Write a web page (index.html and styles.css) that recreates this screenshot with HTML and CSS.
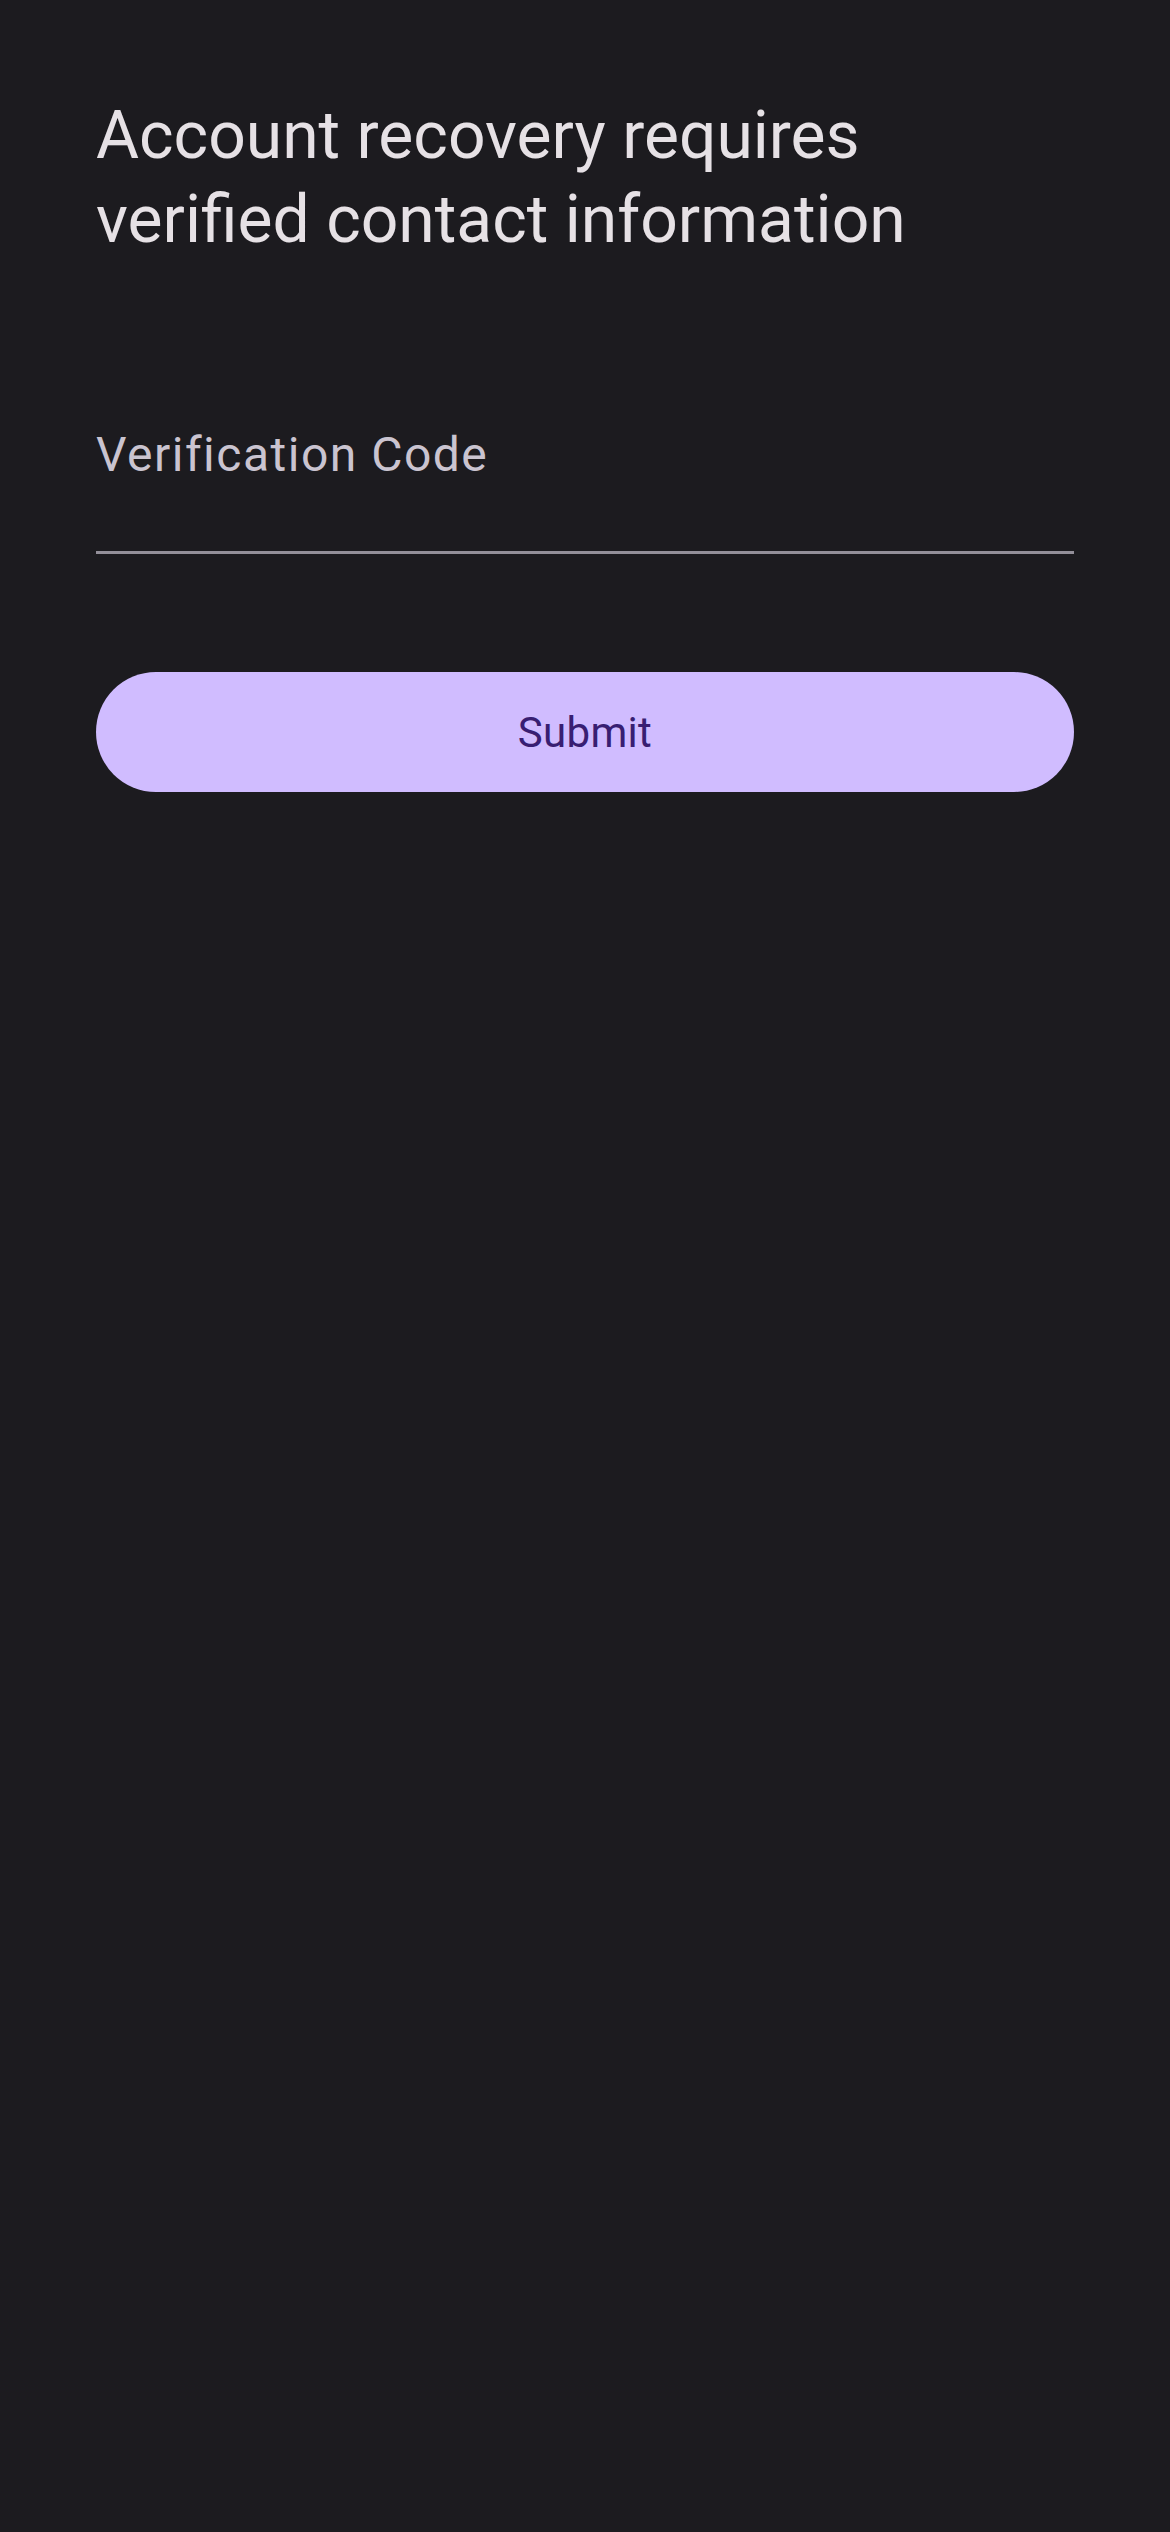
FILE: index.html
```html
<!DOCTYPE html>
<html lang="en">
<head>
<meta charset="utf-8">
<title>Account recovery</title>
<link rel="stylesheet" href="styles.css">
</head>
<body>
<main class="screen">
  <h1 class="title">Account recovery requires verified contact information</h1>
  <label class="field">
    <span class="field-label">Verification Code</span>
  </label>
  <button class="submit" type="button">Submit</button>
</main>
</body>
</html>
```

FILE: styles.css
```css
html, body {
  margin: 0;
  padding: 0;
  background: #1c1b1f;
}
body {
  width: 1170px;
  min-height: 2532px;
  font-family: Roboto, "Noto Sans", "Liberation Sans", sans-serif;
}
.screen {
  display: flex;
  flex-direction: column;
  padding: 94px 96px 0 96px;
}
.title {
  margin: 0;
  font-size: 66px;
  line-height: 84px;
  font-weight: 400;
  color: #e6e1e5;
  max-width: 930px;
}
.field {
  display: block;
  margin-top: 165px;
  border-bottom: 3px solid #938f99;
  height: 124px;
}
.field-label {
  display: block;
  font-size: 48px;
  line-height: 56px;
  letter-spacing: 1.5px;
  color: #cac4d0;
}
.submit {
  margin-top: 118px;
  height: 120px;
  border: 0;
  border-radius: 60px;
  background: #d0bcff;
  color: #381e72;
  font-family: Roboto, "Noto Sans", "Liberation Sans", sans-serif;
  font-size: 42px;
  font-weight: 400;
  letter-spacing: 0.3px;
  padding: 0;
}
```
